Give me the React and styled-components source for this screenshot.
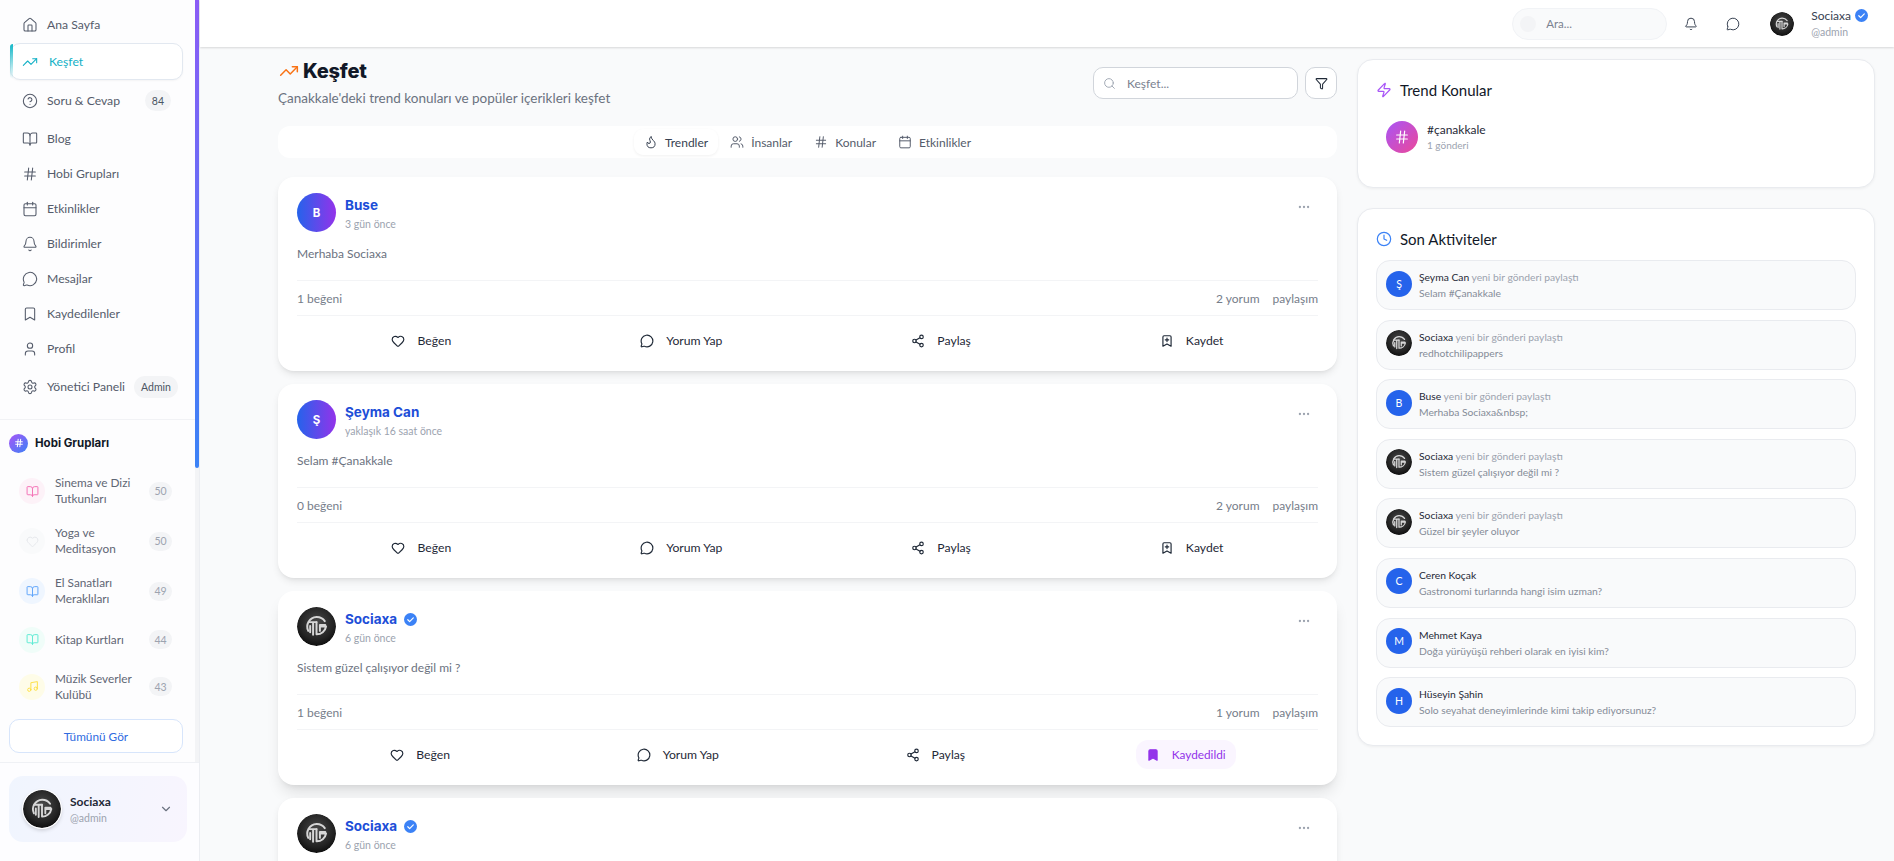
import React from "react";
import styled, { createGlobalStyle } from "styled-components";
import {
  House, TrendingUp, CircleHelp, BookOpen, Hash, Calendar, Bell, MessageCircle, Bookmark, BookmarkPlus,
  User, Users, Settings, Flame, Search, Funnel, Heart, Share2, Zap, Clock, Music, ChevronDown, Ellipsis,
} from "lucide-react";

const BODY = `"Lato", "Noto Sans", sans-serif`;
const HEAD = `"Inter", "Open Sans", sans-serif`;

const Global = createGlobalStyle`
  html, body { margin: 0; padding: 0; height: 100%; overflow: hidden; background: #f9fafb; }
  * { box-sizing: border-box; }
  body { font-family: ${BODY}; color: #111827; }
`;

const Page = styled.div`display: flex; width: 1894px; height: 861px; overflow: hidden;`;

/* ---------- sidebar ---------- */
const Sidebar = styled.aside`
  position: relative; width: 200px; flex: none; height: 100%; background: #fdfdfe;
  border-right: 1px solid #eceef2; display: flex; flex-direction: column;
`;
const ScrollTrack = styled.div`position: absolute; top: 0; right: 0; width: 4px; height: 762px; background: #f3f4f6;`;
const ScrollThumb = styled.div`
  position: absolute; top: 0; right: 0; width: 4px; height: 468px; border-radius: 0 0 3px 3px;
  background: linear-gradient(180deg, #8b5cf6, #3b82f6);
`;
const Nav = styled.nav`height: 420px; padding: 7px 16px 0 10px; border-bottom: 1px solid #f1f2f5; display: flex; flex-direction: column;`;
const NavRow = styled.div`
  position: relative; display: flex; align-items: center; gap: 9px; flex: none;
  height: ${p => (p.$active ? 37 : p.$tall ? 41 : 35)}px;
  margin: ${p => (p.$active ? "1px 0 0" : 0)};
  padding-left: 12px; padding-right: 12px; font-size: 12.2px; font-weight: 400;
  color: ${p => (p.$active ? "#14b1c6" : "#555c6b")};
  ${p => p.$active && `border: 1px solid #e2e8f0; border-radius: 10px; background: #fff; padding-left: 11px; gap: 11px;
    box-shadow: 0 1px 2px rgba(0,0,0,.04);`}
  svg { flex: none; }
`;
const ActiveStripe = styled.span`
  position: absolute; left: -1px; top: 0; bottom: 0; width: 3px; border-radius: 10px 0 0 10px;
  background: linear-gradient(180deg, #14b8c8, rgba(20,184,200,0));
`;
const NavLabel = styled.span`flex: 1; white-space: nowrap;`;
const NavBadge = styled.span`
  flex: none; height: ${p => (p.$wide ? 22 : 21)}px; padding: 0 7px; border-radius: 11px; background: #f3f4f6;
  color: #4b5563; font-size: 10.5px; display: flex; align-items: center;
`;
const GroupsPane = styled.section`height: 342px; padding: 13px 14px 0 9px; display: flex; flex-direction: column;`;
const GroupsTitle = styled.div`display: flex; align-items: center; gap: 7px; height: 20px; font: 700 11.5px ${HEAD}; color: #111827;`;
const GroupsDot = styled.span`
  width: 19px; height: 19px; border-radius: 50%; display: flex; align-items: center; justify-content: center;
  background: linear-gradient(135deg, #a855f7, #3b82f6); color: #fff;
`;
const GroupList = styled.div`display: flex; flex-direction: column; margin-top: 13px;`;
const GroupRow = styled.div`
  display: flex; align-items: center; height: ${p => (p.$short ? 47 : 50)}px; padding-left: 10px; padding-right: 13px;
`;
const GroupIcon = styled.span`
  width: 26px; height: 26px; flex: none; border-radius: 50%; display: flex; align-items: center; justify-content: center;
  background: ${p => p.$bg}; color: ${p => p.$fg};
`;
const GroupName = styled.span`flex: 1; margin-left: 10px; font-size: 11.8px; line-height: 16px; color: #5f6674;`;
const GroupCount = styled.span`
  flex: none; width: 23px; height: 19px; border-radius: 10px; background: #f3f4f6; color: #9ca3af;
  font-size: 10.5px; display: flex; align-items: center; justify-content: center;
`;
const SeeAll = styled.button`
  margin-top: 9px; width: 174px; height: 34px; border-radius: 10px; border: 1px solid #d7e5fb; background: #fff;
  color: #2f6bdf; font: 400 11.8px ${BODY};
`;
const UserPane = styled.section`flex: 1; border-top: 1px solid #eff1f5; padding: 13px 9px; background: #fdfdff;`;
const UserCard = styled.div`
  width: 178px; height: 66px; border-radius: 14px; padding: 0 14px; display: flex; align-items: center;
  background: linear-gradient(100deg, #f0f5fe, #f8f5fe);
`;
const UserText = styled.div`flex: 1; margin-left: 9px; display: flex; flex-direction: column; gap: 2px;`;
const UserName = styled.span`font-size: 12px; font-weight: 700; color: #1f2937; line-height: 15px;`;
const UserHandle = styled.span`font-size: 10.5px; color: #9ca3af; line-height: 14px;`;

/* ---------- shell ---------- */
const Shell = styled.div`flex: 1; min-width: 0; display: flex; flex-direction: column;`;
const Header = styled.header`
  height: 47px; flex: none; background: #fff; display: flex; align-items: center; justify-content: flex-end;
  padding-right: 26px; box-shadow: 0 1px 2px rgba(0,0,0,.14); position: relative; z-index: 2;
`;
const TopSearch = styled.div`
  width: 155px; height: 32px; border-radius: 16px; background: #f9fafb; border: 1px solid #f1f3f6;
  display: flex; align-items: center; padding-left: 7px; gap: 10px;
`;
const TopSearchDot = styled.span`width: 16px; height: 16px; border-radius: 50%; background: #f3f4f6;`;
const TopInput = styled.input`
  border: 0; outline: 0; background: transparent; width: 100px; font: 400 11.5px ${BODY}; padding: 0;
  &::placeholder { color: #7b8290; opacity: 1; }
`;
const TopIcon = styled.span`display: flex; color: #374151; margin-left: ${p => p.$ml}px;`;
const TopUser = styled.div`display: flex; align-items: center; margin-left: 30px; gap: 17px;`;
const TopNames = styled.div`display: flex; flex-direction: column; gap: 3px;`;
const TopName = styled.span`display: flex; align-items: center; gap: 4px; font-size: 12px; line-height: 15px; color: #374151;`;
const TopHandle = styled.span`font-size: 10.5px; line-height: 13px; color: #9ca3af;`;

const Body = styled.main`flex: 1; min-height: 0; overflow: hidden; display: flex; gap: 20px; padding: 12px 0 0 78px;`;
const LeftCol = styled.div`width: 1059px; flex: none; display: flex; flex-direction: column;`;
const RightCol = styled.div`width: 518px; flex: none; display: flex; flex-direction: column; gap: 20px;`;

const PageHead = styled.div`height: 48px; margin-bottom: 19px; display: flex; align-items: center; justify-content: space-between;`;
const TitleBlock = styled.div`display: flex; flex-direction: column; gap: 5px;`;
const Title = styled.h1`margin: 0; display: flex; align-items: center; gap: 4px; font: 800 20px/24px ${HEAD}; color: #111827; letter-spacing: -.2px; padding-left: 1px;`;
const Subtitle = styled.p`margin: 0; font-size: 13.5px; line-height: 20px; color: #6b7280;`;
const HeadTools = styled.div`display: flex; gap: 7px;`;
const SearchBox = styled.div`
  width: 205px; height: 32px; border: 1px solid #d1d5db; border-radius: 10px; background: #fff;
  display: flex; align-items: center; padding-left: 9px; gap: 11px; color: #9ca3af;
`;
const SearchInput = styled.input`
  border: 0; outline: 0; width: 140px; padding: 0; background: transparent; font: 400 12px ${BODY};
  &::placeholder { color: #7b8290; opacity: 1; }
`;
const FilterBtn = styled.button`
  width: 32px; height: 32px; border: 1px solid #d1d5db; border-radius: 10px; background: #fff; padding: 0;
  display: flex; align-items: center; justify-content: center; color: #1f2937;
`;
const Tabs = styled.div`
  height: 32px; flex: none; margin-bottom: 19px; background: #fff; border-radius: 12px;
  display: flex; align-items: center; justify-content: center; gap: 2px;
`;
const Tab = styled.div`
  height: 26px; padding: 0 10px; border-radius: 9px; display: flex; align-items: center; gap: 7px;
  font-size: 12px; color: ${p => (p.$active ? "#374151" : "#555c6b")};
  ${p => p.$active && "box-shadow: 0 1px 3px rgba(0,0,0,.06); background: #fff;"}
`;
const Feed = styled.div`display: flex; flex-direction: column; gap: 13px;`;
const Post = styled.article`
  flex: none; height: 194px; background: #fff; border-radius: 16px; padding: 16px 19px;
  box-shadow: ${p => (p.$raised ? "0 10px 15px -3px rgba(0,0,0,.11), 0 4px 6px -4px rgba(0,0,0,.1)" : "0 4px 8px -2px rgba(0,0,0,.12), 0 2px 4px -2px rgba(0,0,0,.06)")};
`;
const PostHead = styled.div`display: flex; align-items: flex-start; height: 39px;`;
const Avatar = styled.span`
  width: 39px; height: 39px; flex: none; border-radius: 50%; display: flex; align-items: center; justify-content: center;
  background: linear-gradient(90deg, #2563eb, #9333ea); color: #fff; font: 700 11.5px ${HEAD};
`;
const PostMeta = styled.div`flex: 1; margin-left: 9px; display: flex; flex-direction: column; gap: 3px; padding-top: 3px;`;
const PostName = styled.span`display: flex; align-items: center; gap: 7px; font: 700 13.5px/18px ${HEAD}; color: #1d4ed8;`;
const PostTime = styled.span`font-size: 10.5px; line-height: 14px; color: #9ca3af;`;
const MoreBtn = styled.span`display: flex; color: #9ca3af; margin: 7px 7px 0 0;`;
const PostText = styled.p`margin: 12px 0 16px; font-size: 12px; line-height: 20px; color: #6b7280;`;
const Stats = styled.div`
  height: 36px; display: flex; align-items: center; border-top: 1px solid #f3f4f6; border-bottom: 1px solid #f3f4f6;
  font-size: 12px; color: #767d8a;
`;
const StatsRight = styled.span`margin-left: auto; display: flex; gap: 13px;`;
const Actions = styled.div`display: flex; justify-content: space-around; margin-top: 10px;`;
const ActionBtn = styled.div`
  height: 29px; padding: 0 ${p => (p.$saved ? 10 : 16)}px; border-radius: 12px; display: flex; align-items: center; gap: 12px;
  margin-right: ${p => (p.$saved ? 5 : 0)}px;
  font-size: ${p => (p.$saved ? 11.8 : 12.2)}px; color: ${p => (p.$saved ? "#9333ea" : "#1f2937")};
  background: ${p => (p.$saved ? "#faf5ff" : "transparent")};
`;

const Panel = styled.section`
  background: #fff; border: 1px solid #e9ebef; border-radius: 16px; padding: 18px 18px;
  box-shadow: 0 1px 3px rgba(0,0,0,.05);
  ${p => p.$h && `height: ${p.$h}px;`}
`;
const PanelTitle = styled.h2`margin: 0 0 ${p => p.$mb}px; height: 24px; display: flex; align-items: center; gap: 8px; font: 400 15px/24px ${BODY}; color: #111827;`;
const TrendRow = styled.div`display: flex; align-items: center; padding: 8px 8px 8px 10px; gap: 9px;`;
const TrendBubble = styled.span`
  width: 32px; height: 32px; border-radius: 50%; flex: none; display: flex; align-items: center; justify-content: center;
  background: linear-gradient(135deg, #a855f7, #ec4899); color: #fff;
`;
const TrendText = styled.div`display: flex; flex-direction: column; gap: 2px;`;
const TrendName = styled.span`font-size: 12px; line-height: 15px; color: #1f2937;`;
const TrendSub = styled.span`font-size: 10px; line-height: 13px; color: #9ca3af;`;
const ActList = styled.div`display: flex; flex-direction: column; gap: 9.6px;`;
const ActItem = styled.div`
  height: 50px; border: 1px solid #e9ebef; border-radius: 14px; background: #f9fafb; padding: 0 9px; display: flex; align-items: center; gap: 7px;
`;
const ActAvatar = styled.span`
  width: 26px; height: 26px; flex: none; border-radius: 50%; background: #2563eb; color: #fff; margin-top: -3px;
  display: flex; align-items: center; justify-content: center; font-size: 10.5px; font-weight: 400;
`;
const ActText = styled.div`display: flex; flex-direction: column; gap: 3px; font-size: 10.3px; line-height: 13px; margin-top: 1px;`;
const ActLine = styled.span`color: #9ca3af;`;
const ActWho = styled.b`font-weight: 400; color: #1f2937;`;
const ActBody = styled.span`color: #858c98;`;

/* ---------- drawings ---------- */
const LogoWrap = styled.svg`display: block; flex: none; border-radius: 50%; ${p => p.$ring && "box-shadow: 0 0 0 1px #fff, 0 2px 4px rgba(0,0,0,.2);"} ${p => p.$mt && `margin-top:${p.$mt}px;`}`;
let uid = 0;
const Logo = ({ size = 39, ring, mt }) => {
  const id = React.useMemo(() => `lg${uid++}`, []);
  return (
    <LogoWrap $ring={ring} $mt={mt} width={size} height={size} viewBox="0 0 40 40" aria-hidden="true">
      <defs>
        <radialGradient id={id} cx="50%" cy="40%" r="62%">
          <stop offset="0%" stopColor="#4a4a4a" />
          <stop offset="70%" stopColor="#232323" />
          <stop offset="100%" stopColor="#0c0c0c" />
        </radialGradient>
      </defs>
      <circle cx="20" cy="20" r="20" fill={`url(#${id})`} />
      <g fill="none" stroke="#d6d6d6" strokeWidth="2" strokeLinecap="round" strokeLinejoin="round">
        <path d="M11.5 24.5 A10 10 0 0 1 20 10.2 A10 10 0 0 1 28.5 14.5" />
        <path d="M12 15.5 H20 M16.5 15.5 V28.5 M13.5 19.5 V26" />
        <path d="M20 15.5 V28 A9.6 9.6 0 0 0 29.8 20 H24.5 M23.5 24.5 V18.5 H29" />
      </g>
    </LogoWrap>
  );
};
const CheckDot = styled.svg`display: block; flex: none;`;
const Verified = ({ size = 14 }) => (
  <CheckDot width={size} height={size} viewBox="0 0 24 24" aria-hidden="true">
    <circle cx="12" cy="12" r="12" fill="#3b82f6" />
    <path d="M7 12.4l3.4 3.4L17.2 9" fill="none" stroke="#fff" strokeWidth="2.2" strokeLinecap="round" strokeLinejoin="round" />
  </CheckDot>
);

/* ---------- data ---------- */
const navItems = [
  { label: "Ana Sayfa", Icon: House },
  { label: "Keşfet", Icon: TrendingUp, active: true },
  { label: "Soru & Cevap", Icon: CircleHelp, badge: "84" },
  { label: "Blog", Icon: BookOpen },
  { label: "Hobi Grupları", Icon: Hash },
  { label: "Etkinlikler", Icon: Calendar },
  { label: "Bildirimler", Icon: Bell },
  { label: "Mesajlar", Icon: MessageCircle },
  { label: "Kaydedilenler", Icon: Bookmark },
  { label: "Profil", Icon: User },
  { label: "Yönetici Paneli", Icon: Settings, badge: "Admin", wide: true },
];
const groups = [
  { name: <>Sinema ve Dizi<br />Tutkunları</>, count: 50, Icon: BookOpen, bg: "#fdf2f8", fg: "#f472b6" },
  { name: <>Yoga ve<br />Meditasyon</>, count: 50, Icon: Heart, bg: "#f9fafb", fg: "#e5e7eb" },
  { name: <>El Sanatları<br />Meraklıları</>, count: 49, Icon: BookOpen, bg: "#eff6ff", fg: "#60a5fa" },
  { name: "Kitap Kurtları", count: 44, Icon: BookOpen, bg: "#f0fdf9", fg: "#5eead4", short: true },
  { name: <>Müzik Severler<br />Kulübü</>, count: 43, Icon: Music, bg: "#fefce8", fg: "#fde047", short: true },
];
const posts = [
  { name: "Buse", letter: "B", time: "3 gün önce", text: "Merhaba Sociaxa", likes: "1 beğeni", comments: "2 yorum" },
  { name: "Şeyma Can", letter: "Ş", time: "yaklaşık 16 saat önce", text: "Selam #Çanakkale", likes: "0 beğeni", comments: "2 yorum" },
  { name: "Sociaxa", logo: true, time: "6 gün önce", text: "Sistem güzel çalışıyor değil mi ?", likes: "1 beğeni", comments: "1 yorum", saved: true },
  { name: "Sociaxa", logo: true, time: "6 gün önce", text: "Sistem güzel çalışıyor değil mi ?", likes: "1 beğeni", comments: "1 yorum" },
];
const activity = [
  { letter: "Ş", who: "Şeyma Can", rest: " yeni bir gönderi paylaştı", body: "Selam #Çanakkale" },
  { logo: true, who: "Sociaxa", rest: " yeni bir gönderi paylaştı", body: "redhotchilipappers" },
  { letter: "B", who: "Buse", rest: " yeni bir gönderi paylaştı", body: "Merhaba Sociaxa&nbsp;" },
  { logo: true, who: "Sociaxa", rest: " yeni bir gönderi paylaştı", body: "Sistem güzel çalışıyor değil mi ?" },
  { logo: true, who: "Sociaxa", rest: " yeni bir gönderi paylaştı", body: "Güzel bir şeyler oluyor" },
  { letter: "C", who: "Ceren Koçak", rest: "", body: "Gastronomi turlarında hangi isim uzman?" },
  { letter: "M", who: "Mehmet Kaya", rest: "", body: "Doğa yürüyüşü rehberi olarak en iyisi kim?" },
  { letter: "H", who: "Hüseyin Şahin", rest: "", body: "Solo seyahat deneyimlerinde kimi takip ediyorsunuz?" },
];

const PostCard = ({ p, raised }) => (
  <Post $raised={raised}>
    <PostHead>
      {p.logo ? <Logo size={39} /> : <Avatar>{p.letter}</Avatar>}
      <PostMeta>
        <PostName>{p.name}{p.logo && <Verified size={13} />}</PostName>
        <PostTime>{p.time}</PostTime>
      </PostMeta>
      <MoreBtn><Ellipsis size={14} strokeWidth={2} /></MoreBtn>
    </PostHead>
    <PostText>{p.text}</PostText>
    <Stats>
      <span>{p.likes}</span>
      <StatsRight><span>{p.comments}</span><span>paylaşım</span></StatsRight>
    </Stats>
    <Actions>
      <ActionBtn><Heart size={14} strokeWidth={2} />Beğen</ActionBtn>
      <ActionBtn><MessageCircle size={14} strokeWidth={2} />Yorum Yap</ActionBtn>
      <ActionBtn><Share2 size={14} strokeWidth={2} />Paylaş</ActionBtn>
      {p.saved
        ? <ActionBtn $saved><Bookmark size={14} strokeWidth={2} fill="#9333ea" />Kaydedildi</ActionBtn>
        : <ActionBtn><BookmarkPlus size={14} strokeWidth={2} />Kaydet</ActionBtn>}
    </Actions>
  </Post>
);

export default function App() {
  return (
    <Page>
      <Global />
      <Sidebar>
        <ScrollTrack />
        <ScrollThumb />
        <Nav>
          {navItems.map(({ label, Icon, active, badge, wide }) => (
            <NavRow key={label} $active={active} $tall={!!badge}>
              {active && <ActiveStripe />}
              <Icon size={16} strokeWidth={1.6} />
              <NavLabel>{label}</NavLabel>
              {badge && <NavBadge $wide={wide}>{badge}</NavBadge>}
            </NavRow>
          ))}
        </Nav>
        <GroupsPane>
          <GroupsTitle><GroupsDot><Hash size={10} strokeWidth={2.4} /></GroupsDot>Hobi Grupları</GroupsTitle>
          <GroupList>
            {groups.map(({ name, count, Icon, bg, fg, short }) => (
              <GroupRow key={count + bg} $short={short}>
                <GroupIcon $bg={bg} $fg={fg}><Icon size={13} strokeWidth={1.8} /></GroupIcon>
                <GroupName>{name}</GroupName>
                <GroupCount>{count}</GroupCount>
              </GroupRow>
            ))}
          </GroupList>
          <SeeAll>Tümünü Gör</SeeAll>
        </GroupsPane>
        <UserPane>
          <UserCard>
            <Logo size={38} ring />
            <UserText><UserName>Sociaxa</UserName><UserHandle>@admin</UserHandle></UserText>
            <ChevronDown size={14} color="#6b7280" />
          </UserCard>
        </UserPane>
      </Sidebar>
      <Shell>
        <Header>
          <TopSearch><TopSearchDot /><TopInput placeholder="Ara..." /></TopSearch>
          <TopIcon $ml={17}><Bell size={14} strokeWidth={1.7} /></TopIcon>
          <TopIcon $ml={28}><MessageCircle size={14} strokeWidth={1.7} /></TopIcon>
          <TopUser>
            <Logo size={24} />
            <TopNames>
              <TopName>Sociaxa<Verified size={13} /></TopName>
              <TopHandle>@admin</TopHandle>
            </TopNames>
          </TopUser>
        </Header>
        <Body>
          <LeftCol>
            <PageHead>
              <TitleBlock>
                <Title><TrendingUp size={20} color="#f97316" strokeWidth={1.8} />Keşfet</Title>
                <Subtitle>Çanakkale'deki trend konuları ve popüler içerikleri keşfet</Subtitle>
              </TitleBlock>
              <HeadTools>
                <SearchBox><Search size={13} strokeWidth={1.7} /><SearchInput placeholder="Keşfet..." /></SearchBox>
                <FilterBtn><Funnel size={13} strokeWidth={1.9} /></FilterBtn>
              </HeadTools>
            </PageHead>
            <Tabs>
              <Tab $active><Flame size={14} strokeWidth={1.7} />Trendler</Tab>
              <Tab><Users size={14} strokeWidth={1.7} />İnsanlar</Tab>
              <Tab><Hash size={14} strokeWidth={1.7} />Konular</Tab>
              <Tab><Calendar size={14} strokeWidth={1.7} />Etkinlikler</Tab>
            </Tabs>
            <Feed>
              {posts.map((p, i) => <PostCard key={i} p={p} raised={i === 2} />)}
            </Feed>
          </LeftCol>
          <RightCol>
            <Panel $h={129}>
              <PanelTitle $mb={11}><Zap size={16} color="#a855f7" strokeWidth={1.8} />Trend Konular</PanelTitle>
              <TrendRow>
                <TrendBubble><Hash size={16} strokeWidth={1.8} /></TrendBubble>
                <TrendText><TrendName>#çanakkale</TrendName><TrendSub>1 gönderi</TrendSub></TrendText>
              </TrendRow>
            </Panel>
            <Panel>
              <PanelTitle $mb={9}><Clock size={16} color="#3b82f6" strokeWidth={1.8} />Son Aktiviteler</PanelTitle>
              <ActList>
                {activity.map((a, i) => (
                  <ActItem key={i}>
                    {a.logo ? <Logo size={26} mt={-3} /> : <ActAvatar>{a.letter}</ActAvatar>}
                    <ActText>
                      <ActLine><ActWho>{a.who}</ActWho>{a.rest}</ActLine>
                      <ActBody>{a.body}</ActBody>
                    </ActText>
                  </ActItem>
                ))}
              </ActList>
            </Panel>
          </RightCol>
        </Body>
      </Shell>
    </Page>
  );
}
